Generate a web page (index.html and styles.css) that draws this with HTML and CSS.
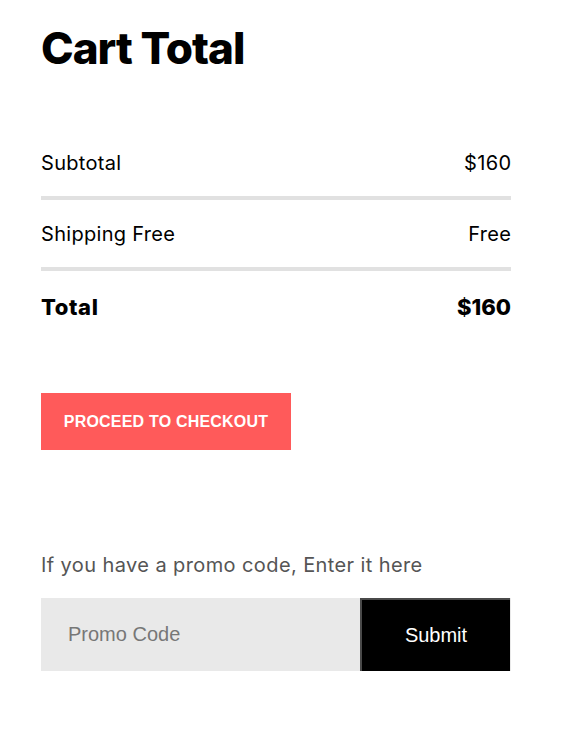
FILE: index.html
```html
<!DOCTYPE html>
<html>
<head>
<meta charset="utf-8">
<link rel="stylesheet" href="styles.css">
</head>
<body>
<div class="cart">
  <h1 class="title">Cart Total</h1>
  <div class="rows">
    <div class="row"><span>Subtotal</span><span class="val">$160</span></div>
    <div class="row"><span>Shipping Free</span><span class="val">Free</span></div>
    <div class="row total"><span>Total</span><span class="val">$160</span></div>
  </div>
  <button class="checkout">PROCEED TO CHECKOUT</button>
  <p class="promo-label">If you have a promo code, Enter it here</p>
  <form class="promo">
    <input class="promo-input" type="text" placeholder="Promo Code">
    <button class="promo-submit" type="button">Submit</button>
  </form>
</div>
</body>
</html>
```

FILE: styles.css
```css
* { box-sizing: border-box; }
body {
  margin: 0;
  background: #fff;
  font-family: "Inter", "Noto Sans", sans-serif;
  color: #000;
}
.cart {
  width: 470px;
  margin-left: 41px;
  padding-top: 20px;
}
.title {
  margin: 0;
  font-size: 44px;
  font-weight: 800;
  line-height: 56px;
  letter-spacing: -1px;
}
.rows {
  margin-top: 53px;
}
.row {
  display: flex;
  justify-content: space-between;
  align-items: center;
  height: 71px;
  font-size: 20px;
  letter-spacing: 0.3px;
  border-bottom: 4px solid #e1e1e1;
}
.row .val {
  margin-right: -0.3px;
}
.row.total {
  border-bottom: none;
  font-weight: 800;
  font-size: 22px;
  letter-spacing: 0.6px;
}
.row.total .val {
  letter-spacing: 0;
  margin-right: 0;
}
.checkout {
  display: block;
  margin-top: 51px;
  width: 250px;
  height: 57px;
  border: none;
  background: #ff5a5a;
  color: #fff;
  font-family: "Liberation Sans", Arial, sans-serif;
  font-weight: 700;
  font-size: 16px;
  letter-spacing: 0.2px;
  cursor: pointer;
}
.promo-label {
  margin: 101px 0 0;
  font-size: 20px;
  letter-spacing: 0.4px;
  color: #555;
  line-height: 28px;
}
.promo {
  display: flex;
  margin-top: 19px;
  height: 73px;
  background: #e9e9e9;
}
.promo-input {
  flex: 1;
  border: none;
  background: transparent;
  padding: 0 0 0 27px;
  font-family: "Liberation Sans", Arial, sans-serif;
  font-size: 20px;
  color: #333;
  outline: none;
}
.promo-input::placeholder { color: #777; }
.promo-submit {
  width: 150px;
  background: #000;
  color: #fff;
  border: none;
  border-left: 2px solid #4a4a4a;
  border-top: 2px solid #4a4a4a;
  font-family: "Liberation Sans", Arial, sans-serif;
  font-size: 20px;
  margin-right: 1px;
}
```
